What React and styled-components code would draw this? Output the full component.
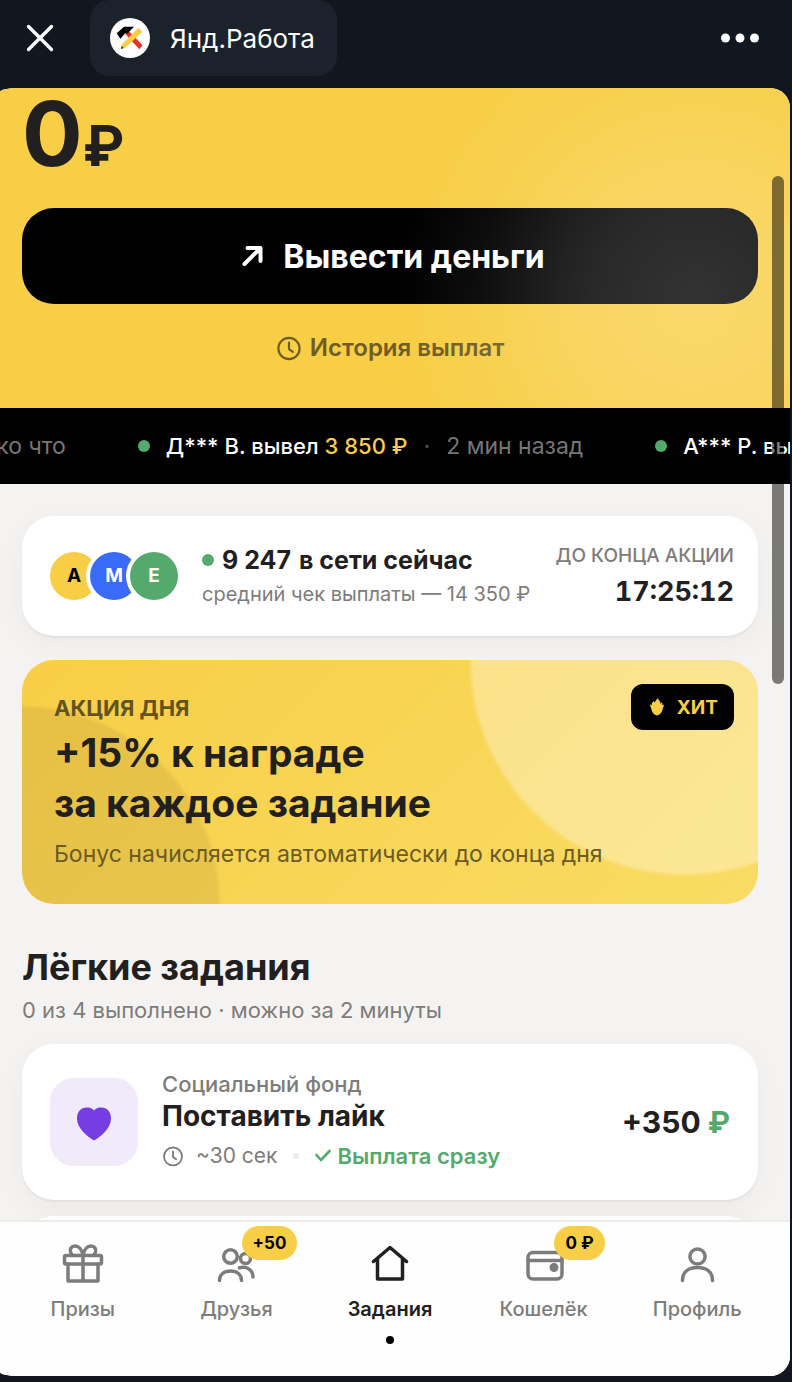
import React from 'react';
import styled, { createGlobalStyle } from 'styled-components';

const colors = {
  ink: '#21201f',
  gray: '#7d7c7a',
  yellow: '#f8ce46',
  green: '#54aa6c',
  paper: '#f4f3f1',
  line: '#ecebe6',
};

const GlobalStyle = createGlobalStyle`
  * {
    box-sizing: border-box;
  }

  body {
    margin: 0;
    background: #10171f;
    font-family: Inter, 'Noto Sans', sans-serif;
    color: ${colors.ink};
  }

  h1, h2, p, ul {
    margin: 0;
    padding: 0;
  }

  ul {
    list-style: none;
  }

  button {
    border: 0;
    padding: 0;
    background: none;
    font: inherit;
    color: inherit;
    cursor: pointer;
  }

  a {
    color: inherit;
    text-decoration: none;
  }

  svg {
    display: block;
    flex: none;
  }
`;

const Screen = styled.div`
  display: flex;
  flex-direction: column;
  height: 100vh;
  padding-bottom: 6px;
`;

/* top bar */

const TopBar = styled.header`
  flex: none;
  display: flex;
  align-items: center;
  padding: 0 32px 12px 20px;
  color: #fff;
`;

const IconButton = styled.button`
  display: flex;
  align-items: center;
  justify-content: center;
  width: 40px;
  height: 40px;
`;

const AppChip = styled.button`
  display: flex;
  align-items: center;
  gap: 20px;
  height: 76px;
  margin: 0 auto 0 30px;
  padding: 0 22px 0 20px;
  border-radius: 20px;
  background: #1b222b;
  font-size: 26px;
`;

/* sheet */

const Sheet = styled.div`
  position: relative;
  flex: 1;
  min-height: 0;
  display: flex;
  flex-direction: column;
  margin-right: 2px;
  border-radius: 18px 20px 20px 18px / 4px 20px 20px 4px;
  overflow: hidden;
  background: ${colors.paper};
`;

const Scroll = styled.main`
  flex: 1;
  min-height: 0;
  overflow-y: auto;
  scrollbar-width: none;
`;

const ScrollThumb = styled.div`
  position: absolute;
  top: 88px;
  right: 6px;
  width: 12px;
  height: 508px;
  border-radius: 6px;
  background: rgba(0, 0, 0, 0.5);
`;

const Hero = styled.section`
  position: relative;
  padding: 0 32px 44px 22px;
  background: ${colors.yellow};

  &::after {
    content: '';
    position: absolute;
    inset: 0;
    pointer-events: none;
    background: radial-gradient(
      circle at 88% 66%,
      rgba(255, 255, 255, 0.2),
      rgba(255, 255, 255, 0.16) 100px,
      rgba(255, 255, 255, 0.13) 140px,
      rgba(255, 255, 255, 0.05) 220px,
      transparent 300px
    );
  }
`;

const Amount = styled.div`
  display: flex;
  align-items: baseline;
  height: 120px;
  line-height: 92px;
  font-size: 90px;
  font-weight: 700;
`;

const Currency = styled.span`
  font-size: 56px;
`;

const WithdrawButton = styled.button`
  display: flex;
  align-items: center;
  justify-content: center;
  gap: 20px;
  width: 100%;
  height: 96px;
  border-radius: 32px;
  background: #000;
  color: #fff;
  font-size: 32px;
  font-weight: 700;
`;

const HistoryLink = styled.a`
  display: flex;
  align-items: center;
  justify-content: center;
  gap: 8px;
  margin-top: 28px;
  line-height: 32px;
  font-size: 24px;
  font-weight: 600;
  color: #6f5d24;
`;

/* ticker */

const Ticker = styled.section`
  overflow: hidden;
  background: #000;
`;

const TickerTrack = styled.ul`
  display: flex;
  align-items: center;
  gap: 72px;
  width: max-content;
  height: 76px;
  margin-left: -54px;
`;

const TickerItem = styled.li`
  display: flex;
  align-items: center;
  gap: 16px;
  font-size: 22px;
  font-weight: 500;
  color: #fff;
`;

const Dot = styled.span`
  flex: none;
  width: 12px;
  height: 12px;
  border-radius: 50%;
  background: ${colors.green};
`;

const TickerSum = styled.span`
  color: ${colors.yellow};
`;

const TickerTime = styled.span`
  font-size: 23px;
  font-weight: 400;
  color: #767676;
`;

const Separator = styled.span`
  color: #4d4d4d;
`;

/* content */

const Content = styled.div`
  padding: 32px 32px 32px 22px;
`;

const Card = styled.div`
  display: flex;
  align-items: center;
  gap: 24px;
  min-height: ${props => (props.$tall ? '156px' : '120px')};
  padding: 0 ${props => (props.$tall ? '28px' : '24px')} 0 28px;
  border-radius: 32px;
  background: #fff;
  box-shadow: 0 2px 2px rgba(0, 0, 0, 0.05), 0 8px 32px rgba(0, 0, 0, 0.04);
`;

const Avatars = styled.div`
  display: flex;
`;

const Avatar = styled.span`
  width: 48px;
  height: 48px;
  border-radius: 50%;
  background: ${props => props.$bg};
  color: ${props => props.$fg};
  box-shadow: 0 0 0 4px #fff;
  line-height: 48px;
  text-align: center;
  font-size: 19px;
  font-weight: 700;

  & + & {
    margin-left: -8px;
  }
`;

const Column = styled.div`
  flex: 1;
  min-width: 0;
  white-space: nowrap;
`;

const OnlineTitle = styled.div`
  display: flex;
  align-items: center;
  gap: 8px;
  line-height: 36px;
  font-size: 25px;
  font-weight: 700;
`;

const Muted = styled.p`
  line-height: 32px;
  font-size: ${props => (props.$small ? 20 : 22)}px;
  color: ${colors.gray};
`;

const Countdown = styled.div`
  text-align: right;
  white-space: nowrap;
`;

const CountdownLabel = styled.div`
  line-height: 32px;
  font-size: 19px;
  font-weight: 500;
  color: ${colors.gray};
`;

const CountdownTime = styled.div`
  line-height: 40px;
  font-size: 27px;
  font-weight: 700;
  font-variant-numeric: tabular-nums;
`;

const Promo = styled.section`
  position: relative;
  margin-top: 24px;
  padding: 32px 32px 34px;
  border-radius: 32px;
  background:
    radial-gradient(circle at calc(100% - 73px) 0, rgba(255, 255, 255, 0.32) 212px, transparent 217px),
    radial-gradient(circle at 0 100%, rgba(0, 0, 0, 0.07) 195px, transparent 200px),
    linear-gradient(135deg, ${colors.yellow}, #f9dc64);
`;

const PromoLabel = styled.div`
  line-height: 32px;
  font-size: 22px;
  font-weight: 700;
  color: #63541f;
`;

const PromoTitle = styled.h1`
  margin: 4px 0 10px;
  line-height: 50px;
  font-size: 39px;
  font-weight: 700;
`;

const PromoText = styled.p`
  line-height: 32px;
  font-size: 23px;
  color: #6b5b25;
`;

const HitBadge = styled.span`
  position: absolute;
  top: 24px;
  right: 24px;
  display: flex;
  align-items: center;
  gap: 12px;
  height: 46px;
  padding: 0 16px 0 18px;
  border-radius: 12px;
  background: #000;
  color: ${colors.yellow};
  font-size: 19px;
  font-weight: 700;
`;

const SectionTitle = styled.h2`
  margin: 39px 0 3px;
  line-height: 48px;
  font-size: 36px;
  font-weight: 700;
`;

const TaskList = styled.div`
  display: grid;
  gap: 16px;
  margin-top: 18px;
`;

const TaskIcon = styled.div`
  display: flex;
  align-items: center;
  justify-content: center;
  width: 88px;
  height: 88px;
  padding-top: 4px;
  border-radius: 24px;
  background: #f0eafa;
`;

const TaskInfo = styled(Column)`
  padding-bottom: 4px;
`;

const TaskOwner = styled.div`
  line-height: 28px;
  font-size: 22px;
  font-weight: 500;
  color: ${colors.gray};
`;

const TaskTitle = styled.div`
  line-height: 36px;
  font-size: 28px;
  font-weight: 700;
`;

const TaskMeta = styled.div`
  display: flex;
  align-items: center;
  gap: 12px;
  margin-top: 8px;
  line-height: 28px;
  font-size: 21px;
  color: ${colors.gray};
`;

const MetaDot = styled.span`
  width: 6px;
  height: 6px;
  margin: 0 4px;
  border-radius: 50%;
  background: ${colors.line};
`;

const Instant = styled.span`
  display: flex;
  align-items: center;
  gap: 6px;
  font-size: 22px;
  font-weight: 600;
  color: ${colors.green};
`;

const Reward = styled.div`
  font-size: 30px;
  font-weight: 700;
  white-space: nowrap;

  span {
    color: ${colors.green};
  }
`;

/* bottom navigation */

const Nav = styled.nav`
  position: relative;
  flex: none;
  display: grid;
  grid-template-columns: repeat(5, 1fr);
  height: 156px;
  padding: 18px 16px 0 6px;
  border-top: 2px solid ${colors.line};
  background: #fefefe;
`;

const NavItem = styled.a`
  display: flex;
  flex-direction: column;
  align-items: center;
  gap: 7px;
  line-height: 28px;
  font-size: 20px;
  font-weight: ${props => (props.$active ? 600 : 500)};
  color: ${props => (props.$active ? colors.ink : colors.gray)};

  &::after {
    content: '';
    width: 8px;
    height: 8px;
    margin-top: 6px;
    border-radius: 50%;
    background: ${props => (props.$active ? '#000' : 'transparent')};
  }
`;

const NavIcon = styled.span`
  position: relative;
`;

const NavBadge = styled.span`
  position: absolute;
  top: -14px;
  right: -37px;
  padding: 0 11px;
  border-radius: 17px;
  background: ${colors.yellow};
  color: #000;
  line-height: 34px;
  font-size: 17px;
  font-weight: 700;
  white-space: nowrap;
`;

const Icon = ({ size, box = size, width = 2, children }) => (
  <svg
    width={size}
    height={size}
    viewBox={`0 0 ${box} ${box}`}
    fill="none"
    stroke="currentColor"
    strokeWidth={width}
    strokeLinecap="round"
    strokeLinejoin="round"
    aria-hidden="true"
  >
    {children}
  </svg>
);

const ClockIcon = ({ size }) => (
  <Icon size={size} box={24} width={2}>
    <circle cx="12" cy="12.500" r="9.800" />
    <path d="M12 7v6l3.500 2.500" />
  </Icon>
);

const Logo = () => (
  <svg width="40" height="40" viewBox="0 0 120 120" aria-hidden="true">
    <circle cx="60" cy="60" r="60" fill="#fff" />
    <path d="M46 48L57 40L98 82L88 94Z" fill="#e5332a" />
    <path d="M20 46L42 26H72L52 47L46 46L31 62Z" fill="#000" />
    <path d="M85 29L97 41L46 89L33 93L36 79Z" fill="#f8ce46" />
    <path d="M33 93L35 84L41 90Z" fill="#222" />
  </svg>
);

const navItems = [
  {
    title: 'Призы',
    icon: (
      <>
        <rect x="5.500" y="15.500" width="37" height="8.500" rx="1.500" />
        <path d="M9 24v17h30V24M24 15v26" />
        <path d="M24 15.500C23 9 19.500 6 16 6c-3.500 0-5.500 3-4.500 6 .5 1.500 1 2.500 2 3M24 15.500C25 9 28.500 6 32 6c3.500 0 5.500 3 4.500 6-.5 1.500-1 2.500-2 3" />
      </>
    ),
  },
  {
    title: 'Друзья',
    badge: '+50',
    icon: (
      <>
        <circle cx="18.500" cy="16.500" r="6.800" />
        <circle cx="33.500" cy="18.500" r="5" />
        <path d="M7.500 40.500C7.500 35 11.500 31 18.500 31S29.500 35 29.500 40.500M27.500 27.800C35 26 41 30 41 37" />
      </>
    ),
  },
  {
    title: 'Задания',
    active: true,
    icon: <path d="M7.500 21.500L24 7.500l16.500 14M11.500 18.500v20.500h25V18.500" />,
  },
  {
    title: 'Кошелёк',
    badge: '0 ₽',
    icon: (
      <>
        <rect x="8" y="12.500" width="34" height="26.500" rx="5" />
        <path d="M8 20.500h34" />
        <circle cx="34" cy="27.500" r="2.700" fill="currentColor" />
      </>
    ),
  },
  {
    title: 'Профиль',
    icon: (
      <>
        <circle cx="24.500" cy="16.500" r="7.600" />
        <path d="M9.500 40.500C9.500 32 15.500 27.500 24.500 27.500S39.500 32 39.500 40.500" />
      </>
    ),
  },
];

const tickerItems = [
  { who: 'Д*** В. вывел', sum: '3 850 ₽', time: '2 мин назад' },
  { who: 'А*** Р. вывел', sum: '5 200 ₽', time: '4 мин назад' },
];

const App = () => (
  <Screen>
    <GlobalStyle />
    <TopBar>
      <IconButton type="button" aria-label="Закрыть">
        <Icon size={28} width={3.4}>
          <path d="M2.500 2.500l23 23M25.500 2.500L2.500 25.500" />
        </Icon>
      </IconButton>
      <AppChip type="button">
        <Logo />
        Янд.Работа
      </AppChip>
      <IconButton type="button" aria-label="Меню">
        <svg width="38" height="10" viewBox="0 0 38 10" fill="currentColor" aria-hidden="true">
          <circle cx="4.500" cy="5" r="4.500" />
          <circle cx="19" cy="5" r="4.500" />
          <circle cx="33.500" cy="5" r="4.500" />
        </svg>
      </IconButton>
    </TopBar>

    <Sheet>
      <Scroll>
        <Hero>
          <Amount>
            0<Currency>₽</Currency>
          </Amount>
          <WithdrawButton type="button">
            <Icon size={28} width={4}>
              <path d="M9.500 22L25 6.500M12.500 6H25.500v13" />
            </Icon>
            Вывести деньги
          </WithdrawButton>
          <HistoryLink href="#history">
            <ClockIcon size={26} />
            История выплат
          </HistoryLink>
        </Hero>

        <Ticker>
          <TickerTrack>
            <TickerItem>
              <TickerTime>только что</TickerTime>
            </TickerItem>
            {tickerItems.map(({ who, sum, time }) => (
              <TickerItem key={who}>
                <Dot />
                <span>
                  {who} <TickerSum>{sum}</TickerSum>
                </span>
                <Separator>·</Separator>
                <TickerTime>{time}</TickerTime>
              </TickerItem>
            ))}
          </TickerTrack>
        </Ticker>

        <Content>
          <Card>
            <Avatars>
              <Avatar $bg={colors.yellow} $fg="#000">A</Avatar>
              <Avatar $bg="#3a6af8" $fg="#fff">M</Avatar>
              <Avatar $bg={colors.green} $fg="#fff">E</Avatar>
            </Avatars>
            <Column>
              <OnlineTitle>
                <Dot />
                <span>9 247</span>
                <span>в сети сейчас</span>
              </OnlineTitle>
              <Muted $small>средний чек выплаты — 14 350 ₽</Muted>
            </Column>
            <Countdown>
              <CountdownLabel>ДО КОНЦА АКЦИИ</CountdownLabel>
              <CountdownTime>17:25:12</CountdownTime>
            </Countdown>
          </Card>

          <Promo>
            <PromoLabel>АКЦИЯ ДНЯ</PromoLabel>
            <PromoTitle>
              +15% к награде
              <br />
              за каждое задание
            </PromoTitle>
            <PromoText>Бонус начисляется автоматически до конца дня</PromoText>
            <HitBadge>
              <svg width="16" height="18" viewBox="0 0 16 18" fill="currentColor" aria-hidden="true">
                <path d="M9 0c0 2 2.500 3 2.800 6 .6-.6.900-1.200 1.100-2 .6 1 .6 2 .4 3.200.7 0 1.200-.4 1.700-1C15 8 14 9.500 13.500 11.500 12.800 14.500 11 17 8 17.500 5 17 3.200 14.500 2.500 11.500 2 9.500 1 8 1 6.200c.5.6 1 1 1.700 1C2.500 5.500 3.500 4 5 3c0 .8.200 1.200.700 1.700C6 3 7.500 2 9 0z" />
              </svg>
              ХИТ
            </HitBadge>
          </Promo>

          <SectionTitle>Лёгкие задания</SectionTitle>
          <Muted>0 из 4 выполнено · можно за 2 минуты</Muted>

          <TaskList>
            <Card $tall>
              <TaskIcon>
                <svg width="34" height="34" viewBox="0 0 34 34" fill="#763de2" aria-hidden="true">
                  <path d="M17 33.500C11 30 0 21.500 0 11.500 0 4.500 4 .500 9.500 .500c3 0 5.500.500 7.500 3 2-2.500 4.500-3 7.500-3 5.500 0 9.500 4 9.500 11 0 10-11 18.500-17 22z" />
                </svg>
              </TaskIcon>
              <TaskInfo>
                <TaskOwner>Социальный фонд</TaskOwner>
                <TaskTitle>Поставить лайк</TaskTitle>
                <TaskMeta>
                  <ClockIcon size={22} />
                  ~30 сек
                  <MetaDot />
                  <Instant>
                    <Icon size={16} width={2.6}>
                      <path d="M1.500 7l4.500 5L14.500 3" />
                    </Icon>
                    Выплата сразу
                  </Instant>
                </TaskMeta>
              </TaskInfo>
              <Reward>
                +350 <span>₽</span>
              </Reward>
            </Card>
            <Card $tall />
          </TaskList>
        </Content>
      </Scroll>

      <ScrollThumb />

      <Nav>
        {navItems.map(({ title, icon, badge, active }) => (
          <NavItem key={title} href={`#${title}`} $active={active}>
            <NavIcon>
              <Icon size={48} width={3.5}>
                {icon}
              </Icon>
              {badge && <NavBadge>{badge}</NavBadge>}
            </NavIcon>
            {title}
          </NavItem>
        ))}
      </Nav>
    </Sheet>
  </Screen>
);

export default App;
